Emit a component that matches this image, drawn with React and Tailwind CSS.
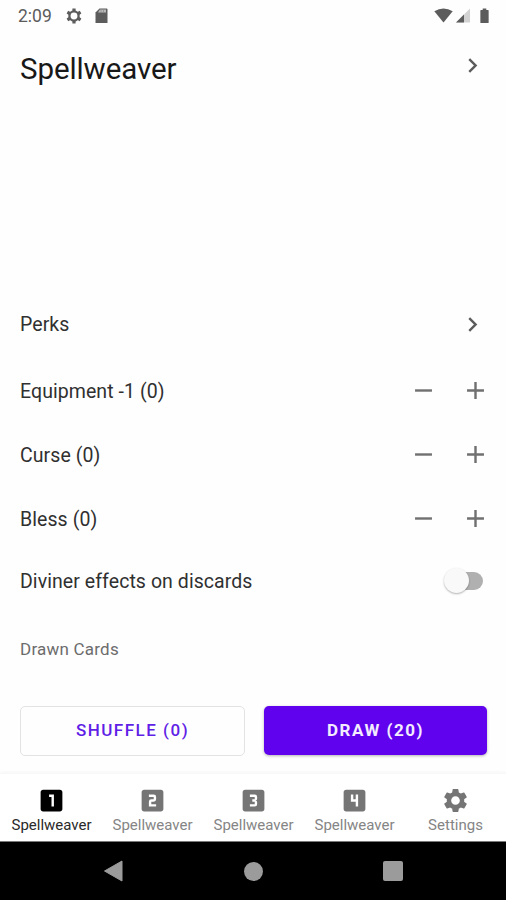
import React, { useState } from 'react';
import {
  MdAdd, MdChevronRight, MdLooks3, MdLooks4, MdLooksOne, MdLooksTwo,
  MdRemove, MdSettings
} from 'react-icons/md';

const TABS = [
  { label: 'Spellweaver', Icon: MdLooksOne },
  { label: 'Spellweaver', Icon: MdLooksTwo },
  { label: 'Spellweaver', Icon: MdLooks3 },
  { label: 'Spellweaver', Icon: MdLooks4 },
  { label: 'Settings', Icon: MdSettings },
];

const StatusBar = () => (
  <div className="h-8 shrink-0 flex items-center justify-between pl-[18px] pr-[17px] text-[#5c5c5c]">
    <div className="flex items-center">
      <span className="w-[35px] pt-[2px] text-[17.5px] leading-none whitespace-nowrap">2:09</span>
      {/* Gear */}
      <svg className="ml-[13px] w-[16px] h-[16px]" viewBox="0 0 16 16" fill="none" stroke="#5c5c5c">
        <circle cx="8" cy="8" r="4.6" strokeWidth="2.3" />
        <path d="M8 0.4V3M8 13V15.6M1.4 4.2L3.7 5.5M12.3 10.5L14.6 11.8M1.4 11.8L3.7 10.5M12.3 5.5L14.6 4.2" strokeWidth="3.2" />
      </svg>
      {/* SD card */}
      <svg className="ml-[13px] w-[13px] h-[16px]" viewBox="0 0 13 16">
        <path d="M4.5 0.5H11.5Q12.5 0.5 12.5 1.5V15H0.5V4.5Z" fill="#5c5c5c" />
        <path d="M4.8 1.6H11V4.4H3Z" fill="#b9b9b9" />
        <path d="M6 1.4V4.6M8.5 1.4V4.6" stroke="#8a8a8a" strokeWidth="0.7" />
      </svg>
    </div>
    <div className="flex items-center pb-[1px]">
      {/* Wi-Fi */}
      <svg className="w-[19px] h-[15px]" viewBox="0 0 19 15">
        <path d="M0.3 3.2Q9.5 -2.4 18.7 3.2L9.5 14.6Z" fill="#5c5c5c" />
      </svg>
      {/* Signal */}
      <svg className="ml-[3px] w-[14px] h-[15px]" viewBox="0 0 14 15">
        <path d="M14 0.5V14.5H0Z" fill="#d2d2d2" />
        <path d="M8 6.5V14.5H0Z" fill="#5c5c5c" />
      </svg>
      {/* Battery */}
      <svg className="ml-[10px] w-[9px] h-[16px]" viewBox="0 0 10 17" preserveAspectRatio="none">
        <path d="M3 0.5H7V2H9Q9.6 2 9.6 2.7V15.4Q9.6 16 9 16H1Q0.4 16 0.4 15.4V2.7Q0.4 2 1 2H3Z" fill="#5c5c5c" />
      </svg>
    </div>
  </div>
);

const Counter = ({ name }) => {
  const [count, setCount] = useState(0);

  return (
    <div className="h-16 flex items-center justify-between pl-5 pr-4">
      <span className="pt-[3px] text-[19.5px] tracking-[0.07px] whitespace-nowrap">{name} ({count})</span>
      <div className="flex items-center gap-[23px] text-[#707070]">
        <button onClick={() => setCount(Math.max(0, count - 1))}><MdRemove className="w-[29px] h-[29px]" /></button>
        <button onClick={() => setCount(count + 1)}><MdAdd className="w-[29px] h-[29px]" /></button>
      </div>
    </div>
  );
};

const App = () => {
  const [active, setActive] = useState(0);
  const [diviner, setDiviner] = useState(false);

  return (
    <div className="w-full h-[900px] flex flex-col overflow-hidden bg-[#fefefe] text-[#303030] font-['Roboto',sans-serif]">
      <StatusBar />

      {/* Class header */}
      <div className="h-[260px] flex items-start justify-between pl-5 pr-[19px] pt-[18px]">
        <h1 className="text-[29.5px] leading-[38px] tracking-[-0.1px] text-[#181818]">Spellweaver</h1>
        <MdChevronRight className="w-[29px] h-[29px] mt-[1px] text-[#5c5c5c]" />
      </div>

      {/* Deck modifiers */}
      <div className="h-[66px] flex items-center justify-between pl-5 pr-[19px]">
        <span className="text-[19.5px] tracking-[0.07px]">Perks</span>
        <MdChevronRight className="w-[29px] h-[29px] mb-[2px] text-[#5c5c5c]" />
      </div>
      <Counter name="Equipment -1" />
      <Counter name="Curse" />
      <Counter name="Bless" />
      <div className="h-[62px] flex items-center justify-between pl-5 pr-[23px]">
        <span className="pt-[2px] text-[19.5px] tracking-[0.07px]">Diviner effects on discards</span>
        <button
          className={`w-[39px] h-[26px] mb-[1px] flex items-center ${diviner ? 'justify-end' : 'justify-start'}`}
          onClick={() => setDiviner(!diviner)}
        >
          <span className="w-[35px] h-[18px] ml-[4px] flex items-center rounded-full bg-[#b0b0b0]">
            <span className="w-[25px] h-[25px] -ml-[4px] shrink-0 rounded-full bg-[#f9f9f9] shadow-[0_1px_2px_rgba(0,0,0,0.3)]"></span>
          </span>
        </button>
      </div>

      <p className="h-[74px] flex items-center pl-5 pt-[2px] text-[17px] tracking-[0.22px] text-[#6c6c6c]">Drawn Cards</p>

      {/* Actions */}
      <div className="h-[87px] flex gap-[19px] pl-5 pr-[19px] pt-5">
        <button className="flex-1 h-[50px] rounded-[5px] border border-[#e3e3e3] text-[17px] font-medium tracking-[1.5px] text-[#5f1fe6]">SHUFFLE (0)</button>
        <button className="flex-1 h-[49px] rounded-[5px] bg-[#6002ee] shadow-[0_1px_3px_rgba(0,0,0,0.3)] text-[17px] font-bold tracking-[1.5px] text-[#f3ecff]">DRAW (20)</button>
      </div>

      {/* Bottom tabs */}
      <div className="h-[68px] flex pl-[1px] bg-white border-t border-[#f8f8f8] shadow-[0_-1px_3px_rgba(0,0,0,0.03)]">
        {TABS.map(({ label, Icon }, idx) => (
          <button
            key={idx}
            className={`flex-1 flex flex-col items-center justify-start pt-[12px] ${active === idx ? 'text-black' : 'text-[#757575]'}`}
            onClick={() => setActive(idx)}
          >
            <Icon className="w-[29px] h-[29px]" />
            <span className={`mt-[1px] text-[15px] leading-[18px] whitespace-nowrap ${active === idx ? 'text-[#2a2a2a]' : 'text-[#858585]'}`}>{label}</span>
          </button>
        ))}
      </div>

      {/* System navigation */}
      <div className="h-[59px] flex items-center justify-center bg-black border-t border-[#7a7a7a]">
        <svg className="w-[20px] h-[22px]" viewBox="0 0 20 22">
          <path d="M19 1V21L1.5 11Z" fill="#9b9b9b" stroke="#9b9b9b" strokeLinejoin="round" />
        </svg>
        <div className="w-[19px] h-[19px] ml-[121px] mr-[120px] rounded-full bg-[#9b9b9b]"></div>
        <div className="w-[20px] h-[20px] rounded-[2px] bg-[#9b9b9b]"></div>
      </div>
    </div>
  );
};

export default App;
